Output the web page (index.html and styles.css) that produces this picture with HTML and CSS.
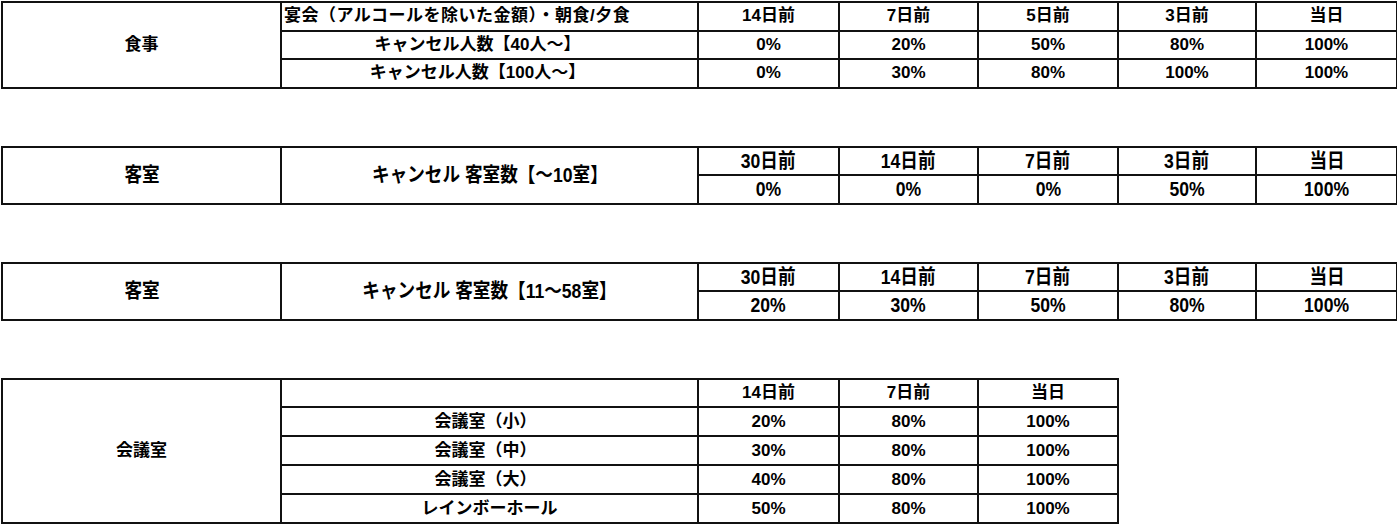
FILE: index.html
```html
<!DOCTYPE html>
<html lang="ja">
<head>
<meta charset="utf-8">
<title>キャンセル料</title>
<link rel="stylesheet" href="styles.css">
</head>
<body>
<div class="page">
  <table class="grid">
    <colgroup><col class="c1"><col class="c2"><col class="c3"><col class="c4"><col class="c5"><col class="c6"><col class="c7"></colgroup>
    <tr>
      <td rowspan="3">食事</td>
      <td class="left">宴会（アルコールを除いた金額）・朝食/夕食</td>
      <td>14日前</td><td>7日前</td><td>5日前</td><td>3日前</td><td>当日</td>
    </tr>
    <tr>
      <td class="offset">キャンセル人数【40人～】</td>
      <td>0%</td><td>20%</td><td>50%</td><td>80%</td><td>100%</td>
    </tr>
    <tr>
      <td class="offset">キャンセル人数【100人～】</td>
      <td>0%</td><td>30%</td><td>80%</td><td>100%</td><td>100%</td>
    </tr>
  </table>

  <table class="grid narrow">
    <colgroup><col class="c1"><col class="c2"><col class="c3"><col class="c4"><col class="c5"><col class="c6"><col class="c7"></colgroup>
    <tr>
      <td rowspan="2"><span class="cond">客室</span></td>
      <td rowspan="2"><span class="cond">キャンセル 客室数【～10室】</span></td>
      <td><span class="cond">30日前</span></td><td><span class="cond">14日前</span></td><td><span class="cond">7日前</span></td><td><span class="cond">3日前</span></td><td><span class="cond">当日</span></td>
    </tr>
    <tr>
      <td><span class="cond">0%</span></td><td><span class="cond">0%</span></td><td><span class="cond">0%</span></td><td><span class="cond">50%</span></td><td><span class="cond">100%</span></td>
    </tr>
  </table>

  <table class="grid narrow">
    <colgroup><col class="c1"><col class="c2"><col class="c3"><col class="c4"><col class="c5"><col class="c6"><col class="c7"></colgroup>
    <tr>
      <td rowspan="2"><span class="cond">客室</span></td>
      <td rowspan="2"><span class="cond">キャンセル 客室数【11～58室】</span></td>
      <td><span class="cond">30日前</span></td><td><span class="cond">14日前</span></td><td><span class="cond">7日前</span></td><td><span class="cond">3日前</span></td><td><span class="cond">当日</span></td>
    </tr>
    <tr>
      <td><span class="cond">20%</span></td><td><span class="cond">30%</span></td><td><span class="cond">50%</span></td><td><span class="cond">80%</span></td><td><span class="cond">100%</span></td>
    </tr>
  </table>

  <table class="grid short">
    <colgroup><col class="c1"><col class="c2"><col class="c3"><col class="c4"><col class="c5"></colgroup>
    <tr>
      <td rowspan="5">会議室</td>
      <td></td>
      <td>14日前</td><td>7日前</td><td>当日</td>
    </tr>
    <tr><td class="offset-sm">会議室（小）</td><td>20%</td><td>80%</td><td>100%</td></tr>
    <tr><td class="offset-sm">会議室（中）</td><td>30%</td><td>80%</td><td>100%</td></tr>
    <tr><td class="offset-sm">会議室（大）</td><td>40%</td><td>80%</td><td>100%</td></tr>
    <tr><td>レインボーホール</td><td>50%</td><td>80%</td><td>100%</td></tr>
  </table>
</div>
</body>
</html>
```

FILE: styles.css
```css
html, body {
  margin: 0;
  padding: 0;
  background: #fff;
}

.page {
  display: flex;
  flex-direction: column;
  gap: 57px;
  padding: 1px 0 0 1px;
  font-family: "Liberation Sans", "Noto Sans CJK JP", sans-serif;
  font-weight: bold;
  font-size: 17px;
  color: #000;
}

.grid {
  border-collapse: collapse;
  table-layout: fixed;
  width: 1395px;
}

.grid.short {
  width: 1116px;
}

.grid td {
  border: 2px solid #111;
  height: 26.5px;
  padding: 0 2px;
  text-align: center;
  vertical-align: middle;
  line-height: 20px;
  white-space: nowrap;
}

.grid.short td {
  height: 26.9px;
}

.grid td.left {
  text-align: left;
  letter-spacing: 0.5px;
}

.grid td.offset {
  padding-right: 26px;
}

.grid td.offset-sm {
  padding-right: 10px;
}

.c1 { width: 279px; }
.c2 { width: 417px; }
.c3 { width: 141px; }
.c4 { width: 139px; }
.c5 { width: 140px; }
.c6 { width: 138px; }
.c7 { width: 141px; }

.narrow td {
  font-size: 20px;
  line-height: 20px;
}

.cond {
  display: inline-block;
  transform: scaleX(0.88);
}
```
